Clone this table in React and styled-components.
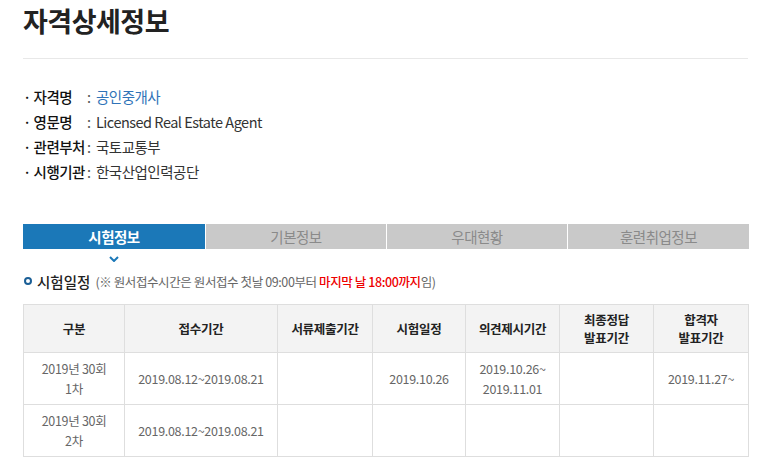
import React from "react";
import styled, { createGlobalStyle } from "styled-components";

const GlobalStyle = createGlobalStyle`
  body {
    margin: 0;
    background: #fff;
    font-family: "Noto Sans CJK KR", "Noto Sans", sans-serif;
    color: #333;
  }
`;

const infoRows = [
  { label: "자격명", value: "공인중개사", link: true },
  { label: "영문명", value: "Licensed Real Estate Agent" },
  { label: "관련부처", value: "국토교통부" },
  { label: "시행기관", value: "한국산업인력공단" },
];

const tabs = ["시험정보", "기본정보", "우대현황", "훈련취업정보"];

const headers = [
  "구분",
  "접수기간",
  "서류제출기간",
  "시험일정",
  "의견제시기간",
  ["최종정답", "발표기간"],
  ["합격자", "발표기간"],
];

const rows = [
  [
    ["2019년 30회", "1차"],
    "2019.08.12~2019.08.21",
    "",
    "2019.10.26",
    ["2019.10.26~", "2019.11.01"],
    "",
    "2019.11.27~",
  ],
  [["2019년 30회", "2차"], "2019.08.12~2019.08.21", "", "", "", "", ""],
];

const colWidths = [101, 153, 95, 93, 94, 94, 95];

const Lines = ({ value }) =>
  Array.isArray(value)
    ? value.map((v, i) => (
        <React.Fragment key={i}>
          {i > 0 && <br />}
          {v}
        </React.Fragment>
      ))
    : value;

const App = () => {
  return (
    <Page>
      <GlobalStyle />
      <Title>자격상세정보</Title>
      <InfoList>
        {infoRows.map((r) => (
          <InfoRow key={r.label}>
            <Label>· {r.label}</Label>
            <Colon>:</Colon>
            <Value link={r.link}>{r.value}</Value>
          </InfoRow>
        ))}
      </InfoList>
      <Tabs>
        {tabs.map((t, i) => (
          <Tab key={t} active={i === 0}>
            {t}
            {i === 0 && (
              <Arrow viewBox="0 0 10 6">
                <path d="M1 1 L5 5 L9 1" fill="none" stroke="#1b78b8" strokeWidth="2" />
              </Arrow>
            )}
          </Tab>
        ))}
      </Tabs>
      <SectionHead>
        <Ring />
        <SectionTitle>시험일정</SectionTitle>
        <Note>
          (※ 원서접수시간은 원서접수 첫날 09:00부터 <Red>마지막 날 18:00까지</Red>임)
        </Note>
      </SectionHead>
      <Table>
        <colgroup>
          {colWidths.map((w, i) => (
            <col key={i} style={{ width: w }} />
          ))}
        </colgroup>
        <thead>
          <tr>
            {headers.map((h, i) => (
              <Th key={i}>
                <Lines value={h} />
              </Th>
            ))}
          </tr>
        </thead>
        <tbody>
          {rows.map((r, ri) => (
            <tr key={ri}>
              {r.map((c, ci) => (
                <Td key={ci}>
                  <Lines value={c} />
                </Td>
              ))}
            </tr>
          ))}
        </tbody>
      </Table>
    </Page>
  );
};

export default App;

const Page = styled.div`
  width: 725px;
  padding: 0 0 0 23px;
`;

const Title = styled.h1`
  margin: 0;
  padding: 3px 0 0;
  font-size: 27px;
  line-height: 36px;
  font-weight: 700;
  color: #222;
  letter-spacing: -0.5px;
  height: 38px;
  border-bottom: 1px solid #e8e8e8;
  padding-bottom: 17px;
`;

const InfoList = styled.div`
  padding-top: 25px;
  margin-bottom: 40px;
`;

const InfoRow = styled.div`
  display: flex;
  align-items: center;
  height: 25px;
  font-size: 14.5px;
  letter-spacing: -0.5px;
`;

const Label = styled.span`
  width: 64px;
  color: #111;
  font-weight: 500;
  white-space: nowrap;
`;

const Colon = styled.span`
  width: 9px;
  color: #555;
`;

const Value = styled.span`
  color: ${({ link }) => (link ? "#2f73b8" : "#333")};
`;

const Tabs = styled.div`
  display: grid;
  grid-template-columns: 182px 180px 180px 181px;
  gap: 1px;
`;

const Tab = styled.div`
  position: relative;
  height: 25px;
  line-height: 25px;
  text-align: center;
  font-size: 14.5px;
  letter-spacing: -0.5px;
  background: ${({ active }) => (active ? "#1b78b8" : "#c9c9c9")};
  color: ${({ active }) => (active ? "#fff" : "#8a8a8a")};
  font-weight: ${({ active }) => (active ? 700 : 400)};
`;

const Arrow = styled.svg`
  position: absolute;
  left: 86px;
  top: 32px;
  width: 10px;
  height: 6px;
`;

const SectionHead = styled.div`
  display: flex;
  align-items: center;
  margin-top: 22px;
  height: 20px;
`;

const Ring = styled.span`
  width: 4px;
  height: 4px;
  border: 2px solid #1b5f96;
  border-radius: 50%;
  margin: 0 5px 0 1px;
`;

const SectionTitle = styled.span`
  font-size: 14.5px;
  font-weight: 500;
  color: #222;
  margin-right: 5px;
`;

const Note = styled.span`
  font-size: 12.5px;
  color: #666;
  letter-spacing: -0.4px;
`;

const Red = styled.span`
  color: #ee0000;
  font-weight: 500;
`;

const Table = styled.table`
  margin-top: 13px;
  border-collapse: collapse;
  table-layout: fixed;
  width: 725px;
`;

const Th = styled.th`
  height: 47px;
  padding: 0;
  background: #f3f3f3;
  border: 1px solid #dedede;
  font-size: 12.5px;
  font-weight: 700;
  line-height: 18px;
  color: #222;
  letter-spacing: -0.3px;
`;

const Td = styled.td`
  height: 51px;
  padding: 0;
  border: 1px solid #dedede;
  text-align: center;
  font-size: 12.5px;
  line-height: 20px;
  color: #666;
  letter-spacing: -0.3px;
`;
